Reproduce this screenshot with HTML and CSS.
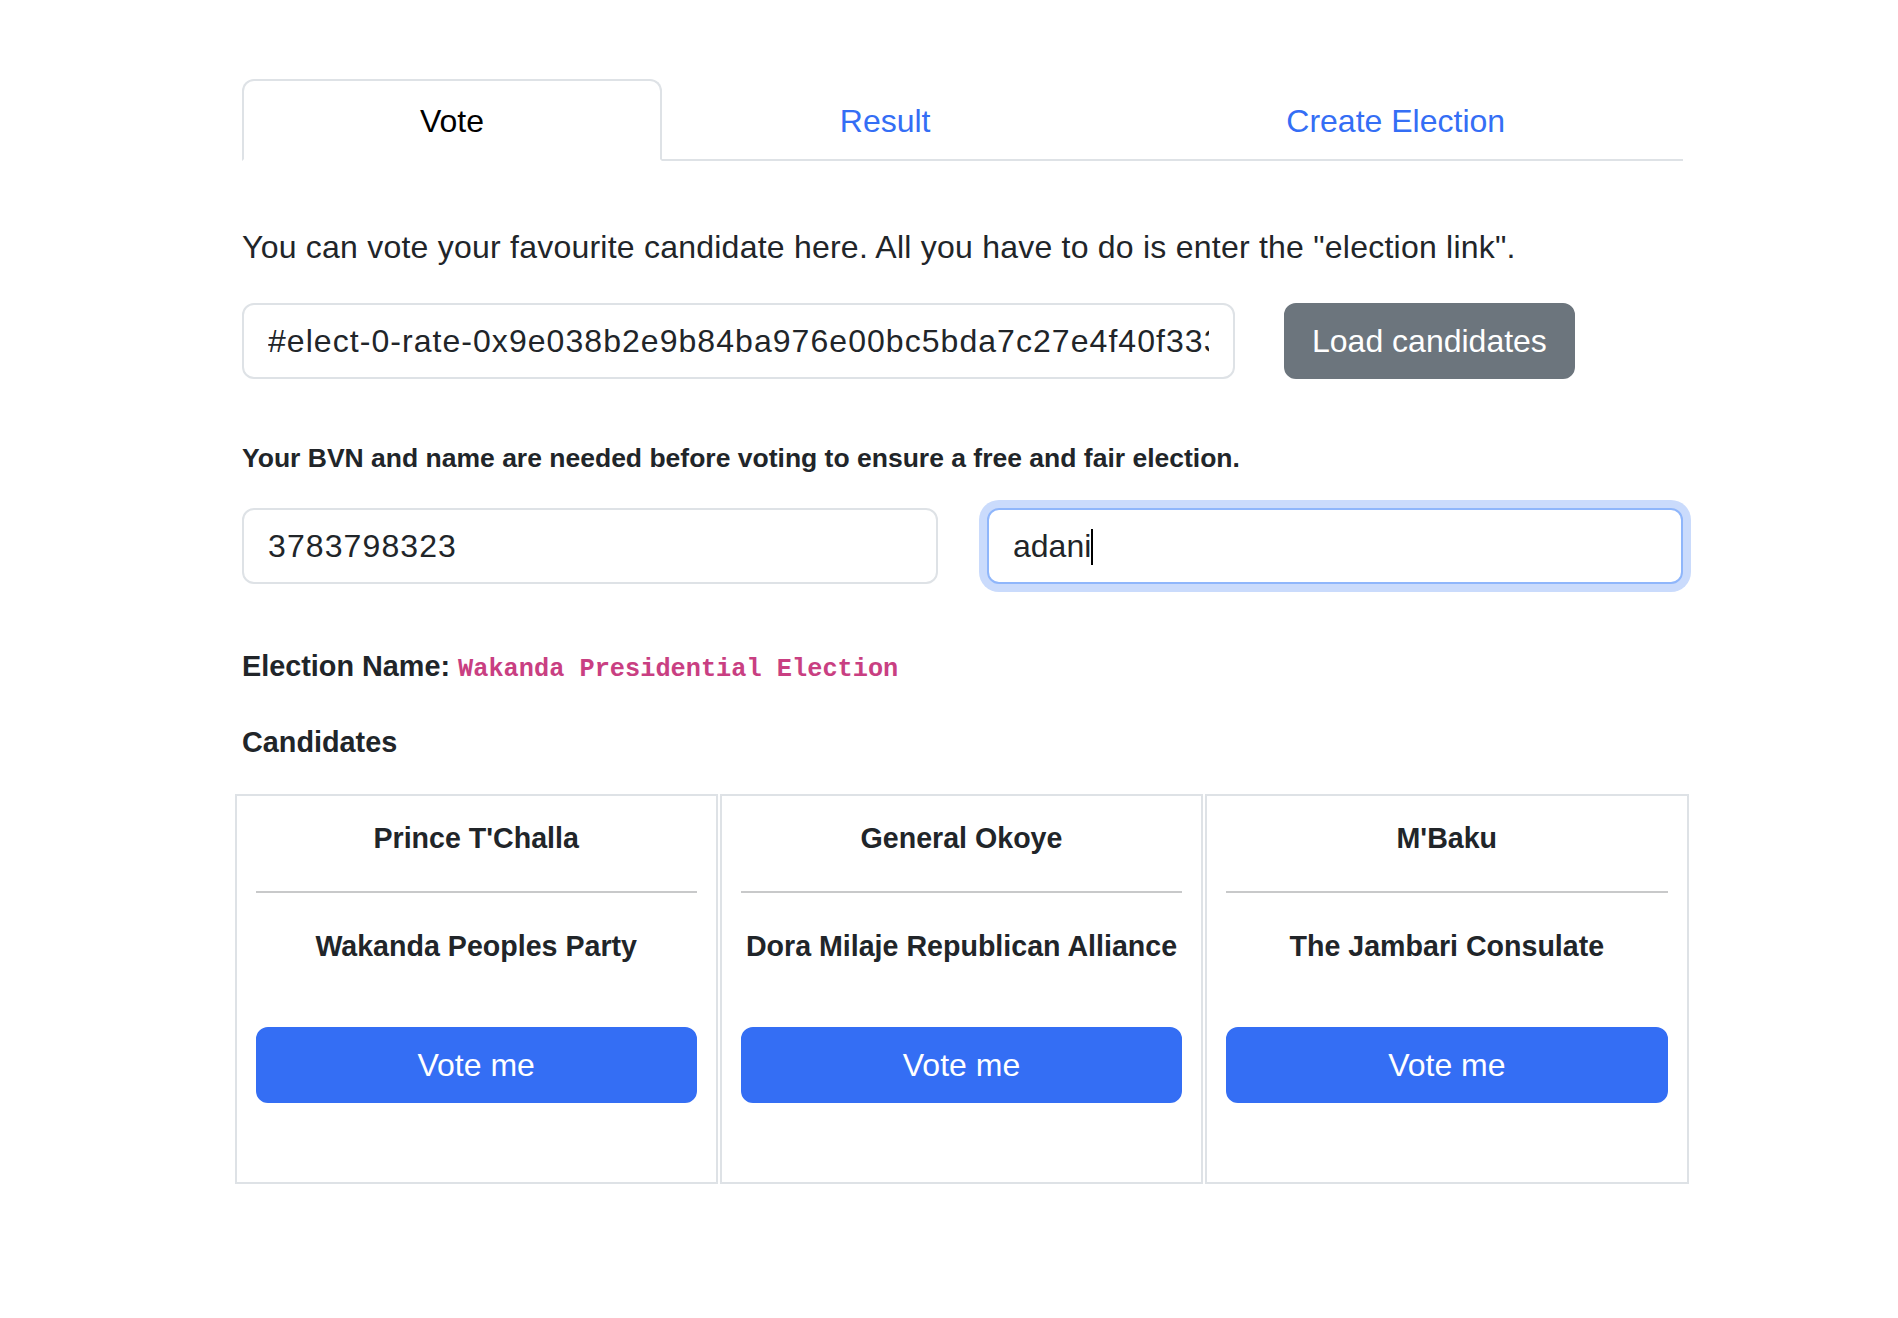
FILE: index.html
```html
<!DOCTYPE html>
<html lang="en">
<head>
<meta charset="utf-8">
<title>Vote</title>
<link rel="stylesheet" href="styles.css">
</head>
<body>
<div class="page">
  <nav class="tabs">
    <a class="tab active">Vote</a>
    <a class="tab">Result</a>
    <a class="tab">Create Election</a>
  </nav>
  <section class="pane">
    <p class="intro">You can vote your favourite candidate here. All you have to do is enter the "election link".</p>
    <div class="link-row">
      <input class="field link-field" type="text" value="#elect-0-rate-0x9e038b2e9b84ba976e00bc5bda7c27e4f40f333a5c1d">
      <button class="btn btn-secondary">Load candidates</button>
    </div>
    <p class="note">Your BVN and name are needed before voting to ensure a free and fair election.</p>
    <div class="id-row">
      <input class="field num-field" type="text" value="3783798323">
      <div class="field-wrap">
        <input class="field focused" type="text" value="adani">
        <span class="caret"></span>
      </div>
    </div>
    <p class="election"><b>Election Name: <code class="ename">Wakanda Presidential Election</code></b></p>
    <h6 class="cand-title">Candidates</h6>
    <div class="cards">
      <div class="card">
        <h6 class="cname">Prince T'Challa</h6>
        <hr class="rule">
        <h6 class="party">Wakanda Peoples Party</h6>
        <button class="btn btn-primary">Vote me</button>
      </div>
      <div class="card">
        <h6 class="cname">General Okoye</h6>
        <hr class="rule">
        <h6 class="party">Dora Milaje Republican Alliance</h6>
        <button class="btn btn-primary">Vote me</button>
      </div>
      <div class="card">
        <h6 class="cname">M'Baku</h6>
        <hr class="rule">
        <h6 class="party">The Jambari Consulate</h6>
        <button class="btn btn-primary">Vote me</button>
      </div>
    </div>
  </section>
</div>
</body>
</html>
```
FILE: styles.css
```css
html, body {
  margin: 0;
  padding: 0;
  background: #fff;
}
body {
  font-family: "Liberation Sans", Arial, sans-serif;
  font-size: 32px;
  line-height: 48px;
  color: #212529;
}
.page {
  width: 1441px;
  margin-left: 242px;
  padding-top: 79px;
}

/* Tabs */
.tabs {
  display: flex;
  border-bottom: 2px solid #dee2e6;
}
.tab {
  flex: 1 1 auto;
  text-align: center;
  padding: 16px 32px 14px;
  border: 2px solid transparent;
  border-top-left-radius: 12px;
  border-top-right-radius: 12px;
  margin-bottom: -2px;
  color: #346ef5;
  cursor: pointer;
}
.tab.active {
  color: #000;
  background: #fff;
  border-color: #dee2e6 #dee2e6 #fff;
}

/* Pane */
.pane {
  padding-top: 62px;
}
.intro {
  margin: 0 0 32px;
  letter-spacing: 0.23px;
}
.link-row {
  display: flex;
  align-items: center;
  gap: 49px;
}
.field {
  box-sizing: border-box;
  height: 76px;
  padding: 12px 24px;
  font-family: "Liberation Sans", Arial, sans-serif;
  font-size: 32px;
  line-height: 48px;
  color: #212529;
  background: #fff;
  border: 2px solid #dee2e6;
  border-radius: 12px;
  outline: none;
  margin: 0;
  width: 100%;
}
.link-field {
  width: 993px;
  flex: 0 0 993px;
  letter-spacing: 1.05px;
}
.num-field {
  letter-spacing: 1.1px;
}
.btn {
  box-sizing: border-box;
  height: 76px;
  padding: 12px 24px;
  font-family: "Liberation Sans", Arial, sans-serif;
  font-size: 32px;
  line-height: 48px;
  border-radius: 12px;
  color: #fff;
  cursor: pointer;
}
.btn-secondary {
  background: #6c757d;
  border: 2px solid #6c757d;
  padding: 12px 26px;
}
.btn-primary {
  display: block;
  width: 100%;
  background: #346ef4;
  border: 2px solid #346ef4;
}
.note {
  margin: 59px 0 30px;
  font-size: 26.5px;
  line-height: 40px;
  font-weight: bold;
}
.id-row {
  display: grid;
  grid-template-columns: 1fr 1fr;
  column-gap: 49px;
}
.field-wrap {
  position: relative;
}
.focused {
  border-color: #8fb6fb;
  box-shadow: 0 0 0 8px #cadbfc;
}
.caret {
  position: absolute;
  left: 104px;
  top: 21px;
  width: 2px;
  height: 36px;
  background: #000;
}
.election {
  margin: 60px 0 28px;
  font-size: 28.8px;
  line-height: 44px;
}
.ename {
  font-family: "Liberation Mono", "DejaVu Sans Mono", monospace;
  font-size: 25.3px;
  color: #c93f82;
}
.cand-title {
  margin: 0 0 30px;
  font-size: 28.8px;
  line-height: 44px;
  font-weight: bold;
}

/* Cards */
.cards {
  display: grid;
  grid-template-columns: repeat(3, 1fr);
  column-gap: 2px;
  width: 1454px;
  margin-left: -7.5px;
}
.card {
  border: 2px solid #dee2e6;
  padding: 21px 19px 21px;
  text-align: center;
}
.cname,
.party {
  margin: 0;
  font-size: 28.6px;
  line-height: 42px;
  font-weight: bold;
}
.rule {
  margin: 32px 0;
  border: 0;
  border-top: 2px solid #c8c9ca;
  height: 0;
}
.card .btn-primary {
  margin-top: 60px;
  margin-bottom: 58px;
}
```
